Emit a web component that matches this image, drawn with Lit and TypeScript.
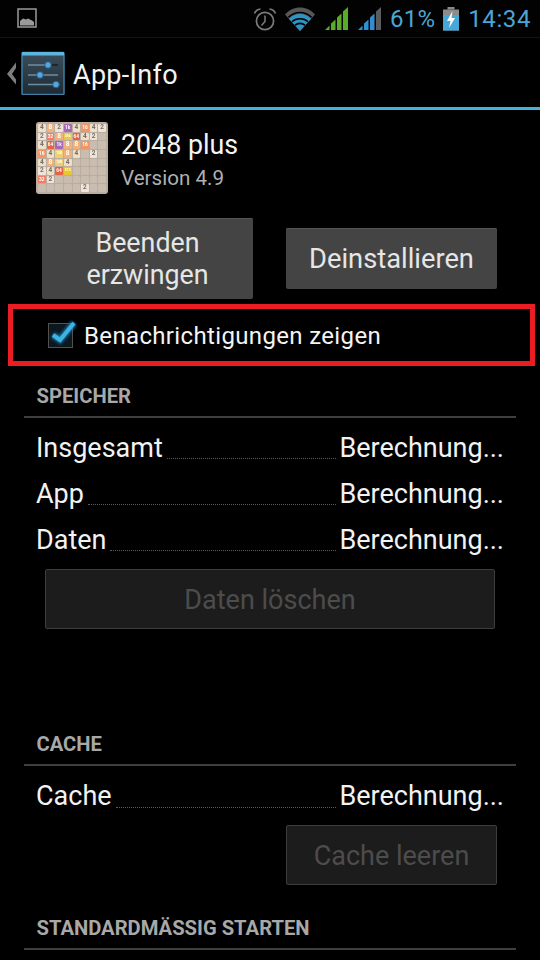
import { LitElement, html, css } from "lit";
import { customElement } from "lit/decorators.js";
import { classMap } from "lit/directives/class-map.js";

const E = "";
const C: Record<string, [string, string]> = {
  "2": ["#eee4da", "#776e65"], "4": ["#ede0c8", "#776e65"], "8": ["#f2b179", "#fff"], "16": ["#f59563", "#fff"],
  "32": ["#f67c5f", "#fff"], "64": ["#e8623f", "#fff"], "128": ["#edcf72", "#fff"], "256": ["#e6c84f", "#fff"],
  "1k": ["#a867b8", "#fff"], "512": ["#e8c62e", "#fff"],
};
const BOARD: string[][] = [
  ["4", "8", "2", "1k", "4", "16", "4", "2"],
  ["2", "32", "8", "256", "64", "4", "2", E],
  ["4", "64", "1k", "8", "8", "16", E, E],
  ["16", "4", "128", "8", "4", E, "2", E],
  ["4", "8", "128", "4", E, E, E, E],
  ["2", "4", "64", "512", E, E, E, E],
  ["32", "2", E, E, E, E, E, E],
  [E, E, E, E, E, "2", E, E],
];

@customElement("app-root")
export class AppRoot extends LitElement {
  static styles = css`
    :host { display: block; width: 540px; height: 960px; overflow: hidden; background: #000; color: #fff;
      font-family: Roboto, "Liberation Sans", sans-serif; }
    .status { height: 38px; display: flex; align-items: center; padding: 0 9px 0 17px; border-bottom: 1px solid #141414; background: #020202; box-sizing: border-box; }
    .status svg { display: block; flex: none; }
    .spacer { flex: 1; }
    .wifi { margin-left: 8px; }
    .sig1 { margin-left: 10px; }
    .sig2 { margin-left: 9px; }
    .batt { margin-left: 8px; }
    .pct { font-size: 24px; color: #4ba6d6; margin-left: 8px; letter-spacing: .2px; }
    .time { font-size: 24px; color: #4ba6d6; margin-left: 9px; letter-spacing: .6px; }
    .actionbar { height: 69px; display: flex; align-items: center; padding-left: 6px; box-sizing: border-box; }
    .actionbar .sett { margin-left: 3px; }
    .actionbar .title { font-size: 27px; margin: 4px 0 0 8px; color: #f2f2f2; letter-spacing: .3px; }
    .bluebar { height: 3px; background: #45b0de; }
    .head { display: flex; padding: 12px 0 0 36px; height: 106px; box-sizing: border-box; }
    .icon { width: 72px; height: 72px; background: #bbad9f; border-radius: 3px; padding: 2px; box-sizing: border-box; filter: blur(.5px);
      display: grid; grid-template-columns: repeat(8, 1fr); grid-template-rows: repeat(8, 1fr); gap: 1px; }
    .cell { background: #c9bdaf; border-radius: 1px; font-weight: 700; line-height: 7.600px; text-align: center; white-space: nowrap; font-size: 6.500px; }
    .cell.two { font-size: 4.800px; }
    .cell.three { font-size: 3.400px; }
    .names { margin-left: 13px; }
    .name { font-size: 26.800px; line-height: 32px; margin-top: 7px; color: #f4f4f4; }
    .ver { font-size: 20.600px; line-height: 25px; margin-top: 5px; color: #b0b0b0; }
    .btns { display: flex; align-items: center; justify-content: space-between; padding: 0 43px 0 42px; height: 84px; }
    .btn { background: #444; border-radius: 2px; color: #e6e6e6; font-size: 27.300px; line-height: 32px; text-align: center; box-sizing: border-box;
      box-shadow: inset 0 1px 0 #555; }
    .b1 { width: 211px; height: 81px; padding-top: 9px; font-size: 26.800px; }
    .b2 { width: 211px; height: 61px; line-height: 62px; }
    .note { margin: 4px 5px 0 8px; height: 62px; border: 5px solid #ea1c24; box-sizing: border-box; display: flex; align-items: center; padding-left: 34px; }
    .note span { font-size: 24px; letter-spacing: .35px; margin: 1px 0 0 5px; color: #f4f4f4; }
    .section { margin: 0 24px; padding: 0 0 0 12.500px; color: #a8a8a8; font-size: 20.200px; font-weight: 700; border-bottom: 2.500px solid #3f3f3f; height: 35px; line-height: 30px; box-sizing: content-box; }
    .s1 { margin-top: 15px; }
    .s2 { margin-top: 100px; }
    .s3 { margin-top: 28px; }
    .rows { padding: 6.500px 36px 0 36px; }
    .rows.tight { padding-top: 7.500px; }
    .row { display: flex; height: 46px; align-items: center; font-size: 27px; color: #f2f2f2; }
    .row .lead { flex: 1; border-bottom: 1px dotted #5a5a5a; height: 1px; margin: 21px 3px 0 4px; }
    .row .val { flex: none; }
    .dis { background: #1c1c1c; border: 1px solid #3d3d3d; border-radius: 2px; color: #4c4c4c; font-size: 27px; text-align: center; box-sizing: border-box; height: 60px; line-height: 61px; overflow: hidden; }
    .d1 { margin: 6px 45px 0 45px; }
    .d2 { margin: 6px 43px 0 286px; }
  `;

  private row(a: string) {
    return html`<div class="row"><span>${a}</span><i class="lead"></i><span class="val">Berechnung...</span></div>`;
  }

  render() {
    return html`
      <div class="status">
        <svg width="21" height="21" viewBox="0 0 21 21"><rect x="1" y="1" width="18" height="18" fill="none" stroke="#9a9a9a" stroke-width="1.500"/><path d="M3 17.500V13l3-2.500 3 1 2-1 4 2 2 1.500v3.500z" fill="#9a9a9a"/></svg>
        <span class="spacer"></span>
        <svg width="24" height="24" viewBox="0 0 24 24">
          <circle cx="12" cy="14" r="8.600" fill="none" stroke="#7c7c7c" stroke-width="1.700"/>
          <path d="M12 8.500V14.500L8.500 18.500" fill="none" stroke="#7c7c7c" stroke-width="1.500"/>
          <path d="M1.500 6.500Q3 2.500 7.500 2M22.500 6.500Q21 2.500 16.500 2" fill="none" stroke="#7c7c7c" stroke-width="1.700"/>
        </svg>
        <svg class="wifi" width="30" height="24" viewBox="0 0 30 24">
          <path d="M0 7.500C4 3 9.500 .5 15 .5S26 3 30 7.500L15 24z" fill="#575757"/>
          <path d="M3.800 11.800C7 8.500 11 7 15 7s8 1.500 11.200 4.800L15 24z" fill="#2f93c4"/>
          <path d="M3.500 10.300C7 7 11 5.500 15 5.500s8 1.500 11.500 4.800" fill="none" stroke="#000" stroke-width="1.600"/>
          <path d="M7 14.800C9 12.800 12 11.800 15 11.800s6 1 8 3" fill="none" stroke="#000" stroke-width="1.600"/>
          <path d="M10 18.200C11.500 17 13.200 16.400 15 16.400s3.500.6 5 1.800" fill="none" stroke="#000" stroke-width="1.600"/>
        </svg>
        <svg class="sig1" width="24" height="24" viewBox="0 0 24 24"><path d="M0 23L4.500 18.500V23zM6 23V16.500L10.500 12.500V23zM12 23V10.500L16.500 6.500V23zM18 23V4.500L23 0V23z" fill="#58ad28"/></svg>
        <svg class="sig2" width="24" height="24" viewBox="0 0 24 24"><path d="M0 23L4.500 18.500V23zM6 23V16.500L10.500 12.500V23zM12 23V10.500L16.500 6.500V23z" fill="#2f8fd2"/><path d="M18 23V4.500L23 0V23z" fill="#5c5c5c"/></svg>
        <span class="pct">61%</span>
        <svg class="batt" width="16" height="24" viewBox="0 0 16 24"><rect x="4.500" y="0" width="7" height="2.500" fill="#8a8a8a"/><rect x="0" y="2.500" width="16" height="21" fill="#8c8c8c"/><rect x="0" y="8" width="16" height="15.500" fill="#45a8d8"/><path d="M9.500 4L4 14h3.500L6 21l6-10H8.500z" fill="#fff"/></svg>
        <span class="time">14:34</span>
      </div>
      <div class="actionbar">
        <svg width="12" height="24" viewBox="0 0 12 24"><path d="M10 1.500L1 13 10 23.500V18.500L6 13 10 7z" fill="#7d7d7d"/></svg>
        <svg class="sett" width="44" height="44" viewBox="0 0 44 44">
          <defs><linearGradient id="sb" x1="0" y1="0" x2="0" y2="1"><stop offset="0" stop-color="#3c4f5c"/><stop offset="1" stop-color="#1e2a33"/></linearGradient></defs>
          <rect x="1" y="1.500" width="42" height="42" rx="1" fill="url(#sb)" stroke="#3f7ea3" stroke-width="1.500"/>
          <rect x="1" y="1" width="42" height="3.500" fill="#5cb6de"/>
          <path d="M7 14H37M7 24H37M7 33.500H37" stroke="#6d8da0" stroke-width="1.600"/>
          <path d="M30 14H37" stroke="#111" stroke-width="1.600"/>
          <circle cx="27" cy="14" r="3.300" fill="#5aa4dc" stroke="#1c5e88"/><circle cx="19" cy="24" r="3.300" fill="#5aa4dc" stroke="#1c5e88"/><circle cx="35" cy="33.500" r="3.300" fill="#5aa4dc" stroke="#1c5e88"/>
        </svg>
        <span class="title">App-Info</span>
      </div>
      <div class="bluebar"></div>
      <div class="head">
        <div class="icon">
          ${BOARD.flat().map((v) => {
            const c = C[v];
            const cls = classMap({ cell: true, two: v.length === 2, three: v.length === 3 });
            return c
              ? html`<div class=${cls} style="background:${c[0]};color:${c[1]}">${v}</div>`
              : html`<div class="cell"></div>`;
          })}
        </div>
        <div class="names">
          <div class="name">2048 plus</div>
          <div class="ver">Version 4.9</div>
        </div>
      </div>
      <div class="btns">
        <div class="btn b1">Beenden<br />erzwingen</div>
        <div class="btn b2">Deinstallieren</div>
      </div>
      <div class="note">
        <svg width="32" height="32" viewBox="0 0 32 32">
          <defs><filter id="g" x="-40%" y="-40%" width="180%" height="180%"><feGaussianBlur stdDeviation="1.500"/></filter></defs>
          <rect x="1.500" y="4.500" width="24" height="24" fill="#0c1820" stroke="#55504e" stroke-width="1"/>
          <path d="M6 16l7 5L27 4" fill="none" stroke="#1d7fb5" stroke-width="6" filter="url(#g)"/>
          <path d="M6 16l7 5L27 4" fill="none" stroke="#3bb3e4" stroke-width="4"/>
        </svg>
        <span>Benachrichtigungen zeigen</span>
      </div>
      <div class="section s1">SPEICHER</div>
      <div class="rows">${this.row("Insgesamt")}${this.row("App")}${this.row("Daten")}</div>
      <div class="dis d1">Daten löschen</div>
      <div class="section s2">CACHE</div>
      <div class="rows tight">${this.row("Cache")}</div>
      <div class="dis d2">Cache leeren</div>
      <div class="section s3">STANDARDMÄSSIG STARTEN</div>
    `;
  }
}
